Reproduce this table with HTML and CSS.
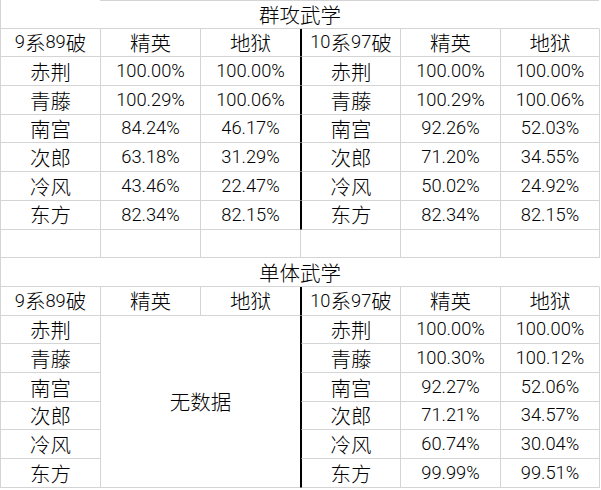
FILE: index.html
```html
<!DOCTYPE html>
<html lang="zh">
<head>
<meta charset="utf-8">
<title>武学</title>
<link rel="stylesheet" href="styles.css">
</head>
<body>
<div class="sheet">
  <div class="t t1">群攻武学</div>

  <div class="c"><span class="n">9</span>系<span class="n">89</span>破</div><div class="c">精英</div><div class="c d">地狱</div>
  <div class="c e"><span class="n">10</span>系<span class="n">97</span>破</div><div class="c">精英</div><div class="c">地狱</div>

  <div class="c">赤荆</div><div class="c n">100.00%</div><div class="c n d">100.00%</div>
  <div class="c e">赤荆</div><div class="c n">100.00%</div><div class="c n">100.00%</div>

  <div class="c">青藤</div><div class="c n">100.29%</div><div class="c n d">100.06%</div>
  <div class="c e">青藤</div><div class="c n">100.29%</div><div class="c n">100.06%</div>

  <div class="c">南宫</div><div class="c n">84.24%</div><div class="c n d">46.17%</div>
  <div class="c e">南宫</div><div class="c n">92.26%</div><div class="c n">52.03%</div>

  <div class="c">次郎</div><div class="c n">63.18%</div><div class="c n d">31.29%</div>
  <div class="c e">次郎</div><div class="c n">71.20%</div><div class="c n">34.55%</div>

  <div class="c">冷风</div><div class="c n">43.46%</div><div class="c n d">22.47%</div>
  <div class="c e">冷风</div><div class="c n">50.02%</div><div class="c n">24.92%</div>

  <div class="c">东方</div><div class="c n">82.34%</div><div class="c n d">82.15%</div>
  <div class="c e">东方</div><div class="c n">82.34%</div><div class="c n">82.15%</div>

  <div class="c"></div><div class="c"></div><div class="c"></div>
  <div class="c"></div><div class="c"></div><div class="c"></div>

  <div class="t">单体武学</div>

  <div class="c"><span class="n">9</span>系<span class="n">89</span>破</div><div class="c">精英</div><div class="c d">地狱</div>
  <div class="c e"><span class="n">10</span>系<span class="n">97</span>破</div><div class="c">精英</div><div class="c">地狱</div>

  <div class="c">赤荆</div><div class="c d nodata">无数据</div>
  <div class="c e">赤荆</div><div class="c n">100.00%</div><div class="c n">100.00%</div>

  <div class="c">青藤</div>
  <div class="c e">青藤</div><div class="c n">100.30%</div><div class="c n">100.12%</div>

  <div class="c">南宫</div>
  <div class="c e">南宫</div><div class="c n">92.27%</div><div class="c n">52.06%</div>

  <div class="c">次郎</div>
  <div class="c e">次郎</div><div class="c n">71.21%</div><div class="c n">34.57%</div>

  <div class="c">冷风</div>
  <div class="c e">冷风</div><div class="c n">60.74%</div><div class="c n">30.04%</div>

  <div class="c">东方</div>
  <div class="c e">东方</div><div class="c n">99.99%</div><div class="c n">99.51%</div>
</div>
</body>
</html>
```

FILE: styles.css
```css
html, body {
  margin: 0;
  padding: 0;
  background: #ffffff;
}

.sheet {
  display: grid;
  grid-template-columns: 100px 100px 100px 100px 100px 99px;
  grid-template-rows: repeat(17, 28.7px);
  border-left: 1px solid #d4d4d4;
  width: 599px;
  font-family: "Noto Sans CJK SC", sans-serif;
  font-weight: 300;
  font-size: 20.5px;
  color: #000000;
}

.c, .t {
  box-sizing: border-box;
  display: flex;
  align-items: center;
  justify-content: center;
  line-height: 1;
  border-bottom: 1px solid #d4d4d4;
  white-space: nowrap;
}

.c {
  border-right: 1px solid #d4d4d4;
}

.t {
  grid-column: 1 / -1;
  border-right: 1px solid #ffffff;
}

.t1 {
  background: linear-gradient(#d4d4d4, #d4d4d4) 99px 0 / calc(100% - 99px) 1px no-repeat;
}

.n {
  font-family: Roboto, "Liberation Sans", sans-serif;
  font-weight: 300;
  font-size: 18.3px;
}

.d {
  border-right-color: #000000;
}

.e {
  border-left: 1px solid #000000;
}

.nodata {
  grid-column: span 2;
  grid-row: span 6;
}
```
